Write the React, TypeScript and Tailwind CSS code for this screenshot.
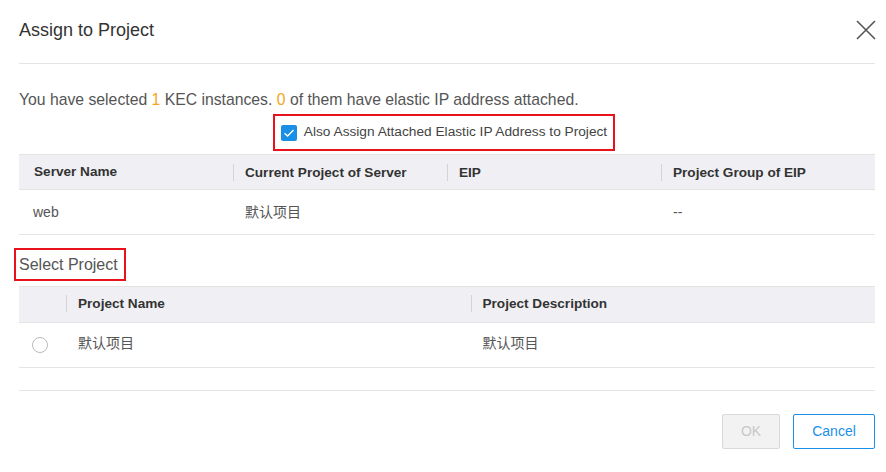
import React from 'react'

const font = { fontFamily: '"Liberation Sans", Arial, "Noto Sans CJK SC", sans-serif' }

export default function App() {
  return (
    <div className="w-[886px] h-[472px] bg-white text-[#555] pl-[19px] pr-[11px]" style={font}>
      {/* Header */}
      <div className="h-[64px] flex items-center justify-between border-b border-[#e4e4e4]">
        <h1 className="text-[18px] text-[#333] leading-none -mt-[4px]">Assign to Project</h1>
        <svg width="20" height="20" viewBox="0 0 20 20" className="-mr-[1px] -mt-[3px]" fill="none" stroke="#555" strokeWidth="1.6">
          <path d="M1 1 L19 19 M19 1 L1 19" />
        </svg>
      </div>

      <p className="mt-[25px] text-[15.75px] leading-[22px]">
        You have selected <span className="text-[#f5a623]">1</span> KEC instances.{' '}
        <span className="text-[#f5a623]">0</span> of them have elastic IP address attached.
      </p>

      <div className="flex justify-center mt-[3px] pr-[6px]">
        <div className="inline-flex items-center gap-[7px] h-[37px] px-[6px] border-2 border-[#e8121c]">
          <span className="w-[16px] h-[16px] rounded-[2px] bg-[#1a8fe6] flex items-center justify-center">
            <svg width="12" height="12" viewBox="0 0 12 12" fill="none" stroke="#fff" strokeWidth="1.4">
              <path d="M1.5 6.2 L4.6 9 L10.5 3" />
            </svg>
          </span>
          <span className="text-[13.7px] text-[#444]">Also Assign Attached Elastic IP Address to Project</span>
        </div>
      </div>

      {/* Server table */}
      <div className="mt-[3px]">
        <div className="grid grid-cols-4 h-[35px] items-center bg-[#f0f0f4] border-t border-[#e4e4e4] text-[13.6px] font-bold text-[#333]">
          <div className="pl-[15px]">Server Name</div>
          <div className="pl-[11px] border-l border-[#d4d4d8] leading-[17px]">Current Project of Server</div>
          <div className="pl-[11px] border-l border-[#d4d4d8] leading-[17px]">EIP</div>
          <div className="pl-[11px] border-l border-[#d4d4d8] leading-[17px]">Project Group of EIP</div>
        </div>
        <div className="grid grid-cols-4 h-[46px] items-center border-y border-[#e4e4e4] text-[14px]">
          <div className="pl-[14px]">web</div>
          <div className="pl-[12px]">默认项目</div>
          <div className="pl-[12px]"></div>
          <div className="pl-[12px]">--</div>
        </div>
      </div>

      <div className="mt-[13px] -ml-[5px]">
        <span className="inline-flex items-center h-[33px] pl-[3px] pr-[6px] border-2 border-[#e8121c] text-[16px]">
          Select Project
        </span>
      </div>

      {/* Project table */}
      <div className="mt-[5px]">
        <div className="grid grid-cols-[47px_1fr_1fr] h-[36px] items-center bg-[#f0f0f4] border-t border-[#e4e4e4] text-[13.6px] font-bold text-[#333]">
          <div></div>
          <div className="pl-[11px] border-l border-[#d4d4d8] leading-[17px] -mt-[2px]">Project Name</div>
          <div className="pl-[11px] border-l border-[#d4d4d8] leading-[17px] -mt-[2px]">Project Description</div>
        </div>
        <div className="grid grid-cols-[47px_1fr_1fr] h-[46px] items-center border-y border-[#e4e4e4] text-[14px]">
          <div className="pl-[13px]">
            <span className="block w-[16px] h-[16px] rounded-full border border-[#bbb]"></span>
          </div>
          <div className="pl-[12px] -mt-[3px]">默认项目</div>
          <div className="pl-[12px] -mt-[3px]">默认项目</div>
        </div>
      </div>

      {/* Footer */}
      <div className="mt-[22px] border-t border-[#e4e4e4] flex justify-end gap-[13px] pt-[23px]">
        <button className="w-[58px] h-[35px] border border-[#d9d9d9] bg-[#f2f2f2] text-[#c8c8c8] text-[14px] rounded-[2px]">
          OK
        </button>
        <button className="w-[82px] h-[35px] border border-[#1a90e8] text-[#1a90e8] text-[14px] rounded-[2px]">
          Cancel
        </button>
      </div>
    </div>
  )
}
